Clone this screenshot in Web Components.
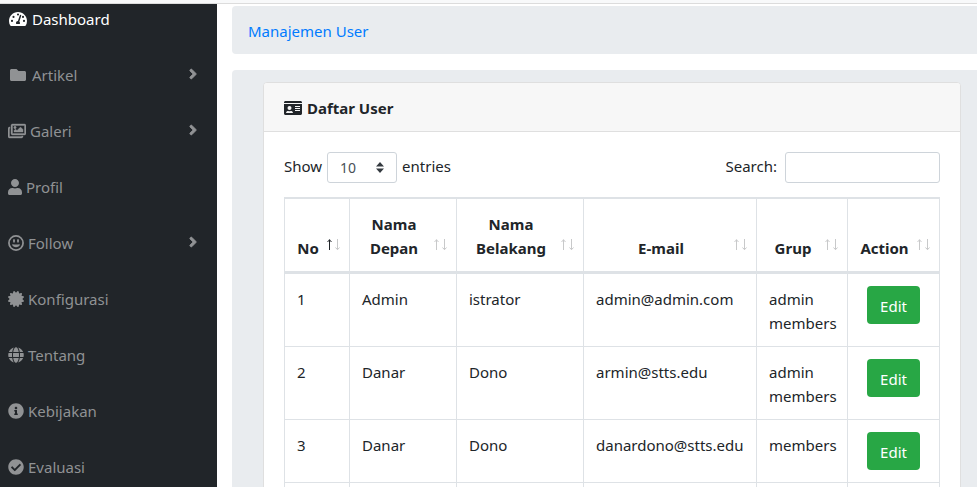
<!DOCTYPE html>
<html lang="id">
<head>
<meta charset="utf-8">
<meta name="viewport" content="width=device-width, initial-scale=1">
<title>Manajemen User</title>
<style>
  html, body { margin: 0; height: 100%; overflow: hidden; }
  body { font: 15px/24px "Noto Sans", "Open Sans", sans-serif; color: #212529; background: #fff; }
</style>
</head>
<body>
<app-shell>
  <side-nav slot="nav">
    <nav-item icon="tachometer" fixed active>Dashboard</nav-item>
    <nav-item icon="folder" fixed expandable>Artikel</nav-item>
    <nav-item icon="images" expandable>Galeri</nav-item>
    <nav-item icon="user">Profil</nav-item>
    <nav-item icon="smile" expandable>Follow</nav-item>
    <nav-item icon="certificate">Konfigurasi</nav-item>
    <nav-item icon="globe">Tentang</nav-item>
    <nav-item icon="info">Kebijakan</nav-item>
    <nav-item icon="check">Evaluasi</nav-item>
  </side-nav>
  <bread-crumb>Manajemen User</bread-crumb>
  <content-panel>
    <info-card>
      <span slot="title">Daftar User</span>
      <table-controls></table-controls>
      <user-table></user-table>
    </info-card>
  </content-panel>
</app-shell>
<script>
const ICONS = {
  tachometer: [18, '0 0 576 512', '<path fill-rule="evenodd" d="M288 32C129 32 0 161 0 320c0 53 14 102 39 145 6 10 16 15 27 15h444c11 0 21-5 27-15 25-43 39-92 39-145C576 161 447 32 288 32zM288 76a34 34 0 1 1 0 68a34 34 0 1 1 0-68zM96 350a34 34 0 1 1 0-68a34 34 0 1 1 0 68zM144 222a34 34 0 1 1 0-68a34 34 0 1 1 0 68zM480 350a34 34 0 1 1 0-68a34 34 0 1 1 0 68zM448 222a34 34 0 1 1 0-68a34 34 0 1 1 0 68zM344 416H232c-5-9-8-20-8-32 0-35 28-63 62-64l61-184c4-12 18-19 30-15s20 18 15 31l-61 182c13 12 21 30 21 50 0 12-3 23-8 32z"/>'],
  folder: [16, '0 0 512 512', '<path d="M464 128H272l-64-64H48C21.49 64 0 85.49 0 112v288c0 26.51 21.49 48 48 48h416c26.51 0 48-21.49 48-48V176c0-26.51-21.49-48-48-48z"/>'],
  images: [18, '0 0 576 512', '<path stroke="currentColor" stroke-width="12" d="M480 416v16c0 26.51-21.49 48-48 48H48c-26.51 0-48-21.49-48-48V176c0-26.51 21.49-48 48-48h16v48H54a6 6 0 0 0-6 6v244a6 6 0 0 0 6 6h372a6 6 0 0 0 6-6v-10h48zm42-336H150a6 6 0 0 0-6 6v244a6 6 0 0 0 6 6h372a6 6 0 0 0 6-6V86a6 6 0 0 0-6-6zm6-48c26.51 0 48 21.49 48 48v256c0 26.51-21.49 48-48 48H144c-26.51 0-48-21.49-48-48V80c0-26.51 21.49-48 48-48h384zM264 144c0 22.091-17.909 40-40 40s-40-17.909-40-40 17.909-40 40-40 40 17.909 40 40zm-72 96l39.515-39.515c4.686-4.686 12.284-4.686 16.971 0L288 240l103.515-103.515c4.686-4.686 12.284-4.686 16.971 0L480 208v80H192v-48z"/>'],
  user: [14, '0 0 448 512', '<path d="M224 256c70.7 0 128-57.3 128-128S294.7 0 224 0 96 57.3 96 128s57.3 128 128 128zm89.6 32h-16.7c-22.2 10.2-46.9 16-72.9 16s-50.6-5.8-72.9-16h-16.7C60.2 288 0 348.2 0 422.4V464c0 26.5 21.5 48 48 48h352c26.5 0 48-21.5 48-48v-41.6c0-74.2-60.2-134.4-134.4-134.4z"/>'],
  smile: [16, '0 0 512 512', '<circle cx="256" cy="256" r="226" fill="none" stroke="currentColor" stroke-width="56"/><ellipse cx="192" cy="184" rx="32" ry="60"/><ellipse cx="320" cy="184" rx="32" ry="60"/><path d="M361 294c-26 8-64 13-105 13s-79-5-105-13c-10-3-21 5-19 17 8 47 71 80 124 80s116-33 124-80c2-12-9-20-19-17z"/>'],
  certificate: [16, '0 0 512 512', '<path d="M458.622 255.92l45.985-45.005c13.708-12.977 7.316-36.039-10.664-40.339l-62.65-15.99 17.661-62.015c4.991-17.838-11.829-34.663-29.661-29.671l-61.994 17.667-15.984-62.671C337.085.197 313.765-6.276 300.99 7.228L256 53.57 211.011 7.229c-12.63-13.351-36.047-7.234-40.325 10.668l-15.984 62.671-61.995-17.667C74.87 57.907 58.056 74.738 63.046 92.572l17.661 62.015-62.65 15.99C.069 174.878-6.31 197.944 7.392 210.915l45.985 45.005-45.985 45.004c-13.708 12.977-7.316 36.039 10.664 40.339l62.65 15.99-17.661 62.015c-4.991 17.838 11.829 34.663 29.661 29.671l61.994-17.667 15.984 62.671c4.439 18.575 27.696 24.018 40.325 10.668L256 458.61l44.989 46.001c12.5 13.488 35.987 7.486 40.325-10.668l15.984-62.671 61.994 17.667c17.836 4.994 34.651-11.837 29.661-29.671l-17.661-62.015 62.65-15.99c17.987-4.302 24.366-27.367 10.664-40.339l-45.984-45.004z"/>'],
  globe: [16, '0 0 496 512', '<path d="M336.5 160C322 70.7 287.8 8 248 8s-74 62.7-88.5 152h177zM152 256c0 22.2 1.2 43.5 3.3 64h185.3c2.1-20.5 3.3-41.8 3.3-64s-1.2-43.5-3.3-64H155.3c-2.1 20.5-3.3 41.8-3.3 64zm324.7-96c-28.6-67.9-86.5-120.4-158-141.6 24.4 33.8 41.2 84.7 50 141.6h108zM177.2 18.4C105.8 39.6 47.8 92.1 19.3 160h108c8.7-56.9 25.5-107.8 49.9-141.6zM487.4 192H372.7c2.1 21 3.3 42.5 3.3 64s-1.2 43-3.3 64h114.6c5.5-20.5 8.6-41.8 8.6-64s-3.1-43.5-8.5-64zM120 256c0-21.5 1.2-43 3.3-64H8.6C3.2 212.5 0 233.8 0 256s3.2 43.5 8.6 64h114.6c-2-21-3.2-42.5-3.2-64zm39.5 96c14.5 89.3 48.7 152 88.5 152s74-62.7 88.5-152h-177zm159.3 141.6c71.4-21.2 129.4-73.7 158-141.6h-108c-8.8 56.9-25.6 107.8-50 141.6zM19.3 352c28.6 67.9 86.5 120.4 158 141.6-24.4-33.8-41.2-84.7-50-141.6h-108z"/>'],
  info: [16, '0 0 512 512', '<path d="M256 8C119.043 8 8 119.083 8 256c0 136.997 111.043 248 248 248s248-111.003 248-248C504 119.083 392.957 8 256 8zm0 110c23.196 0 42 18.804 42 42s-18.804 42-42 42-42-18.804-42-42 18.804-42 42-42zm56 254c0 6.627-5.373 12-12 12h-88c-6.627 0-12-5.373-12-12v-24c0-6.627 5.373-12 12-12h12v-64h-12c-6.627 0-12-5.373-12-12v-24c0-6.627 5.373-12 12-12h64c6.627 0 12 5.373 12 12v100h12c6.627 0 12 5.373 12 12v24z"/>'],
  check: [16, '0 0 512 512', '<path d="M504 256c0 136.967-111.033 248-248 248S8 392.967 8 256 119.033 8 256 8s248 111.033 248 248zM227.314 387.314l184-184c6.248-6.248 6.248-16.379 0-22.627l-22.627-22.627c-6.248-6.249-16.379-6.249-22.628 0L216 308.118l-70.059-70.059c-6.248-6.248-16.379-6.248-22.628 0l-22.627 22.627c-6.248 6.248-6.248 16.379 0 22.627l104 104c6.249 6.249 16.379 6.249 22.628.001z"/>'],
  angle: [8, '0 0 256 512', '<path d="M224.3 273l-136 136c-9.4 9.4-24.6 9.4-33.9 0l-22.6-22.6c-9.4-9.4-9.4-24.6 0-33.9l96.4-96.4-96.4-96.4c-9.4-9.4-9.4-24.6 0-33.9L54.3 103c9.4-9.4 24.6-9.4 33.9 0l136 136c9.5 9.4 9.5 24.6.1 34z" stroke="currentColor" stroke-width="24"/>'],
  idcard: [18, '0 0 576 512', '<path fill-rule="evenodd" d="M48 32h480c27 0 48 21 48 48v16H0V80c0-27 21-48 48-48zM0 128h576v304c0 27-21 48-48 48H48c-27 0-48-21-48-48zM176 192a64 64 0 1 0 0 128a64 64 0 1 0 0-128zM82 416h188c11 0 19-10 15-20-9-26-34-44-64-44h-8c-24 9-50 9-74 0h-8c-30 0-55 18-64 44-4 10 4 20 15 20zM352 192h160v32H352zM352 256h160v32H352zM352 320h160v32H352z"/>']
};

const define = (name, html, init) => {
  const template = document.createElement('template');
  template.innerHTML = html;
  customElements.define(name, class extends HTMLElement {
    connectedCallback() {
      if (this.shadowRoot) return;
      this.attachShadow({ mode: 'open' }).append(template.content.cloneNode(true));
      if (init) init(this, this.shadowRoot);
    }
  });
};

define('fa-icon', `
  <style>
    :host { display: inline-flex; justify-content: center; flex: none; }
    svg { display: block; height: 16px; fill: currentColor; }
  </style>`, (host, root) => {
  const [width, box, body] = ICONS[host.getAttribute('name')];
  root.innerHTML += `<svg width="${width}" viewBox="${box}" aria-hidden="true">${body}</svg>`;
});

define('app-shell', `
  <style>
    :host { display: flex; flex-direction: column; height: 100vh; overflow: hidden; }
    header { flex: none; height: 3px; background: #f8f9fa; border-bottom: 1px solid #dcdcdc; }
    .body { display: flex; flex: 1; min-height: 0; }
    ::slotted([slot="nav"]) { flex: none; width: 217px; }
    /* The content column runs past the right edge of the window by its gutter. */
    main { flex: 1; min-width: 0; margin-right: -15px; padding: 2px 0 0 15px; }
  </style>
  <header></header>
  <div class="body"><slot name="nav"></slot><main><slot></slot></main></div>`);

define('side-nav', `
  <style>
    :host { display: block; background: #212529; overflow: hidden; }
    nav { display: flex; flex-direction: column; gap: 32px; padding-top: 3px; }
  </style>
  <nav><slot></slot></nav>`);

define('nav-item', `
  <style>
    :host { display: block; color: #909294; }
    :host([active]) { color: #fff; }
    a { display: flex; align-items: center; gap: 4px; padding: 0 20px 0 8px; color: inherit; text-decoration: none; }
    :host([fixed]) .lead { width: 20px; }
    .caret { margin-left: auto; padding-bottom: 2px; }
  </style>
  <a href="#"><slot></slot></a>`, (host, root) => {
  const link = root.querySelector('a');
  link.insertAdjacentHTML('afterbegin', `<fa-icon class="lead" name="${host.getAttribute('icon')}"></fa-icon>`);
  if (host.hasAttribute('expandable')) link.insertAdjacentHTML('beforeend', '<fa-icon class="caret" name="angle"></fa-icon>');
});

define('bread-crumb', `
  <style>
    :host { display: block; margin-bottom: 16px; padding: 13px 16px 11px; background: #e9ecef; border-radius: 4px; }
    a { color: #007bff; text-decoration: none; }
  </style>
  <nav aria-label="Breadcrumb"><a href="#"><slot></slot></a></nav>`);

define('content-panel', `
  <style>:host { display: block; padding: 12px 31px; background: #e9ecef; border-radius: 4px; }</style>
  <slot></slot>`);

define('info-card', `
  <style>
    :host { display: block; background: #fff; border: 1px solid #dfdfdf; border-radius: 4px; }
    header { display: flex; align-items: center; gap: 5px; padding: 13px 20px 11px; background: #f7f7f7; border-bottom: 1px solid #dfdfdf; border-radius: 3px 3px 0 0; font-weight: 700; }
    .body { padding: 20px; }
  </style>
  <header><fa-icon name="idcard"></fa-icon><slot name="title"></slot></header>
  <div class="body"><slot></slot></div>`);

define('table-controls', `
  <style>
    :host { display: flex; justify-content: space-between; margin-bottom: 14px; }
    label { display: flex; align-items: flex-start; gap: 5px; }
    label > span { padding-top: 2px; }
    label > .pick { padding-top: 0; }
    .search { gap: 8px; }
    .pick { position: relative; display: flex; }
    select, input { box-sizing: border-box; height: 31px; margin: 0; border: 1px solid #ced4da; border-radius: 3px; background: #fff; color: #495057; font: 14px/20px "Noto Sans", sans-serif; }
    select { appearance: none; width: 70px; padding: 0 24px 0 12px; }
    .pick svg { position: absolute; right: 12px; top: 10px; pointer-events: none; }
    input { width: 155px; padding: 4px 8px; }
  </style>
  <label for="length"><span>Show</span>
    <span class="pick"><select id="length"><option>10</option><option>25</option><option>50</option><option>100</option></select>
      <svg width="10" height="11" viewBox="0 0 10 11" fill="#343a40" aria-hidden="true"><path d="M5 0l4 4.600H1zM5 11l4-4.600H1z"/></svg></span>
    <span>entries</span></label>
  <label class="search" for="search"><span>Search:</span><input id="search" type="search"></label>`);

define('sort-arrows', `
  <style>
    :host { display: block; }
    svg { display: block; fill: none; stroke: #c8c9ca; }
    :host([dir="asc"]) .up { stroke: #212529; }
  </style>
  <svg width="14" height="12" viewBox="0 0 14 12" aria-hidden="true">
    <path class="up" d="M2.500 11V.5M.5 3l2-2.200 2 2.200"/><path d="M10.500 0v10.500M8.500 8.500l2 2.200 2-2.200"/>
  </svg>`);

define('edit-link', `
  <style>
    :host { display: block; text-align: center; }
    a { display: inline-block; vertical-align: top; padding: 8px 13px 6px; border-radius: 4px; background: #28a745; color: #fff; text-decoration: none; }
  </style>
  <a href="#"><slot></slot></a>`);

define('user-table', `
  <style>
    :host { display: block; }
    table { width: 100%; table-layout: fixed; border-collapse: separate; border-spacing: 0; border-left: 1px solid #dee2e6; }
    th, td { padding: 13px 12px 11px; border-right: 1px solid #dee2e6; border-bottom: 1px solid #dee2e6; vertical-align: top; text-align: left; }
    th { position: relative; padding-right: 30px; border-top: 2px solid #dee2e6; border-bottom-width: 3px; vertical-align: bottom; }
    td.act { padding: 12px; }
    th button { display: flex; justify-content: center; width: 100%; padding: 0; border: 0; background: none; color: inherit; font: inherit; text-align: center; }
    sort-arrows { position: absolute; right: 8px; bottom: 20px; }
    .no { width: 65px; } .first { width: 107px; } .last { width: 127px; } .group { width: 91px; } .action { width: 92px; }
  </style>
  <table>
    <colgroup><col class="no"><col class="first"><col class="last"><col><col class="group"><col class="action"></colgroup>
    <thead><tr></tr></thead>
    <tbody></tbody>
  </table>`, (host, root) => {
  root.querySelector('thead tr').innerHTML = ['No', 'Nama Depan', 'Nama Belakang', 'E-mail', 'Grup', 'Action']
    .map((t, i) => `<th scope="col"${i ? '' : ' aria-sort="ascending"'}><button type="button">${t}<sort-arrows${i ? '' : ' dir="asc"'}></sort-arrows></button></th>`).join('');
  root.querySelector('tbody').innerHTML = [
    ['1', 'Admin', 'istrator', 'admin@admin.com', 'admin<br>members'],
    ['2', 'Danar', 'Dono', 'armin@stts.edu', 'admin<br>members'],
    ['3', 'Danar', 'Dono', 'danardono@stts.edu', 'members'],
    ['', '', '', '', '']
  ].map(row => `<tr>${row.map(c => `<td>${c}</td>`).join('')}<td class="act">${row[0] ? '<edit-link>Edit</edit-link>' : ''}</td></tr>`).join('');
});
</script>
</body>
</html>
